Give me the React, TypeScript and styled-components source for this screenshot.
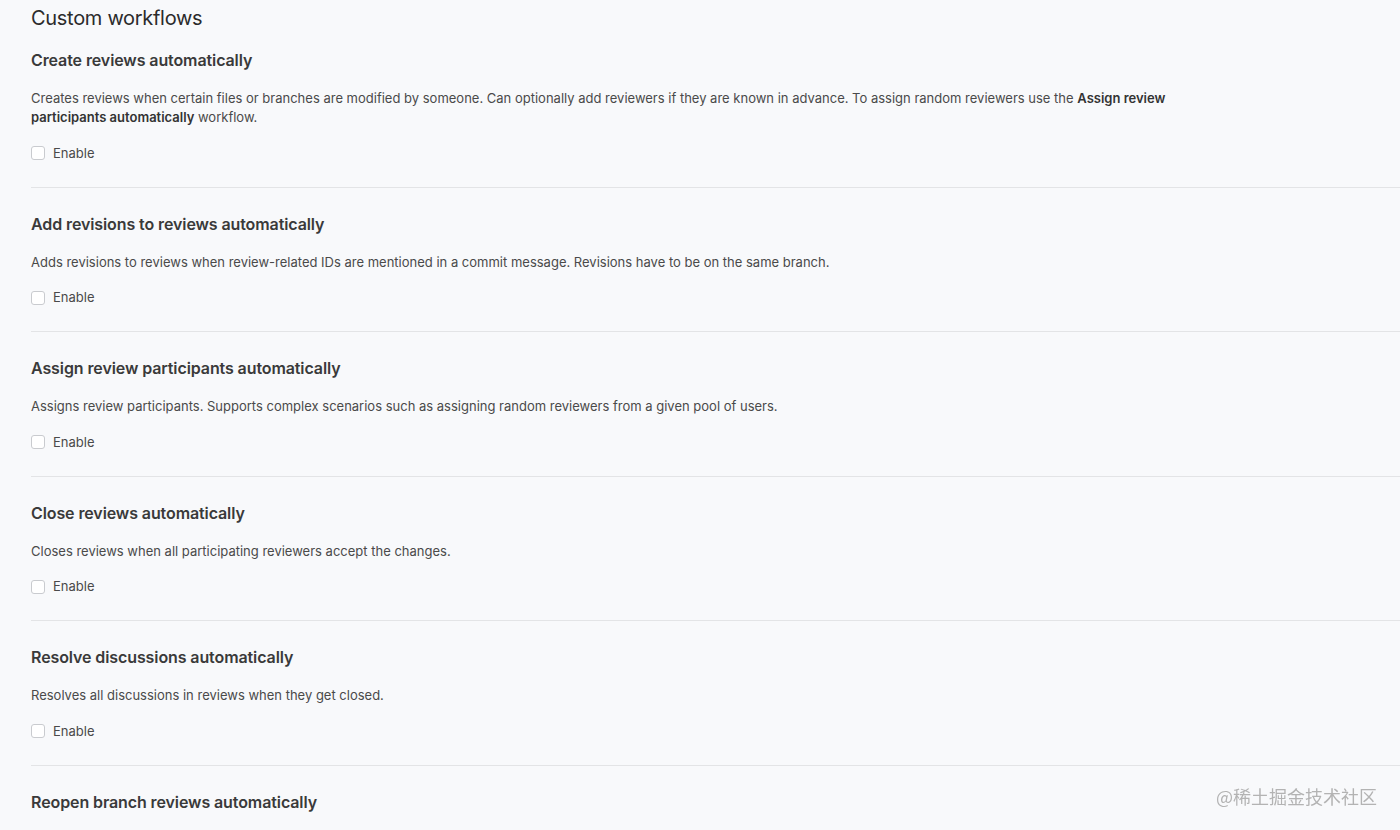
import React from 'react'
import styled, {createGlobalStyle} from 'styled-components'

// data
type Workflow = {
    title: string
    description?: React.ReactNode
}

const workflows: Workflow[] = [
    {
        title: 'Create reviews automatically',
        description: <>
            Creates reviews when certain files or branches are modified by someone. Can optionally add reviewers if
            they are known in advance. To assign random reviewers use the <b>Assign review participants
            automatically</b> workflow.
        </>
    },
    {
        title: 'Add revisions to reviews automatically',
        description: 'Adds revisions to reviews when review-related IDs are mentioned in a commit message. Revisions have to be on the same branch.'
    },
    {
        title: 'Assign review participants automatically',
        description: 'Assigns review participants. Supports complex scenarios such as assigning random reviewers from a given pool of users.'
    },
    {
        title: 'Close reviews automatically',
        description: 'Closes reviews when all participating reviewers accept the changes.'
    },
    {
        title: 'Resolve discussions automatically',
        description: 'Resolves all discussions in reviews when they get closed.'
    },
    {
        title: 'Reopen branch reviews automatically',
    },
]

export default function App() {
    return (
        <>
            <GlobalStyle/>
            <Page>
                <Title>Custom workflows</Title>
                {workflows.map((item, index) =>
                    <Section key={index}>
                        <Heading>{item.title}</Heading>
                        {item.description && <>
                            <Description>{item.description}</Description>
                            <EnableLabel>
                                <Checkbox type="checkbox"/>
                                Enable
                            </EnableLabel>
                        </>}
                    </Section>
                )}
            </Page>
            <Watermark>@稀土掘金技术社区</Watermark>
        </>
    )
}

const GlobalStyle = createGlobalStyle`
  html, body {
    margin: 0;
    padding: 0;
    background: #f8f9fb;
    overflow: hidden;
  }

  body {
    font-family: Inter, "Noto Sans", sans-serif;
    color: #333;
  }
`

const Page = styled.main`
  display: flex;
  flex-direction: column;
  padding-left: 31px;
  height: 830px;
  overflow: hidden;
`

const Title = styled.h1`
  margin: 8px 0 -4px;
  font-size: 20px;
  line-height: 20px;
  font-weight: 400;
  letter-spacing: -0.3px;
  color: #2b2b2b;
`

const Section = styled.section`
  display: flex;
  flex-direction: column;
  align-items: flex-start;
  flex-shrink: 0;
  padding: 26px 0 24px;
  border-bottom: 1px solid #e3e4e6;

  &:last-child {
    border-bottom: none;
  }
`

const Heading = styled.h2`
  margin: 0 0 19px;
  font-size: 16px;
  line-height: 20px;
  font-weight: 600;
  letter-spacing: -0.1px;
  color: #3a3a3a;
`

const Description = styled.p`
  margin: 0 0 16.5px;
  max-width: 1160px;
  font-size: 13px;
  line-height: 19px;
  color: #4a4a4a;

  b {
    font-weight: 600;
    color: #333;
  }
`

const EnableLabel = styled.label`
  display: flex;
  align-items: center;
  gap: 8px;
  font-size: 13px;
  line-height: 19px;
  color: #4a4a4a;
`

const Checkbox = styled.input`
  appearance: none;
  margin: 0;
  width: 14px;
  height: 14px;
  border: 1px solid #c9cbcf;
  border-radius: 3px;
  background: #fff;
`

const Watermark = styled.div`
  position: fixed;
  right: 23px;
  bottom: 22px;
  font-family: "Noto Sans CJK SC", sans-serif;
  font-size: 18px;
  line-height: 24px;
  color: #b3b3b3;
`
